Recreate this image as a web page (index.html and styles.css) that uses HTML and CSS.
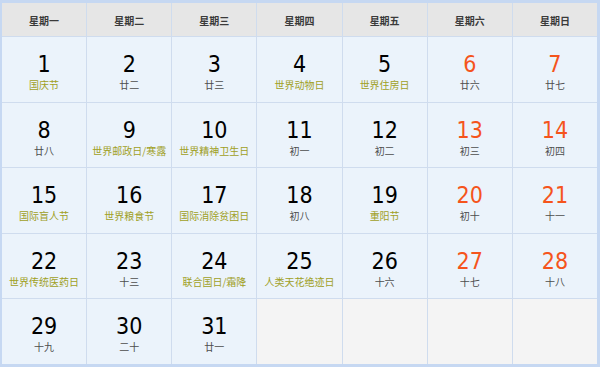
FILE: index.html
```html
<!DOCTYPE html>
<html lang="zh">
<head>
<meta charset="utf-8">
<link rel="stylesheet" href="styles.css">
</head>
<body>
<div class="cal">
  <div class="grid">
    <div class="hd">星期一</div><div class="hd">星期二</div><div class="hd">星期三</div><div class="hd">星期四</div><div class="hd">星期五</div><div class="hd">星期六</div><div class="hd">星期日</div>

    <div class="day"><span class="num">1</span><span class="fest">国庆节</span></div>
    <div class="day"><span class="num">2</span><span class="lunar">廿二</span></div>
    <div class="day"><span class="num">3</span><span class="lunar">廿三</span></div>
    <div class="day"><span class="num">4</span><span class="fest">世界动物日</span></div>
    <div class="day"><span class="num">5</span><span class="fest">世界住房日</span></div>
    <div class="day"><span class="num wk">6</span><span class="lunar">廿六</span></div>
    <div class="day"><span class="num wk">7</span><span class="lunar">廿七</span></div>

    <div class="day"><span class="num">8</span><span class="lunar">廿八</span></div>
    <div class="day"><span class="num">9</span><span class="fest">世界邮政日/寒露</span></div>
    <div class="day"><span class="num">10</span><span class="fest">世界精神卫生日</span></div>
    <div class="day"><span class="num">11</span><span class="lunar">初一</span></div>
    <div class="day"><span class="num">12</span><span class="lunar">初二</span></div>
    <div class="day"><span class="num wk">13</span><span class="lunar">初三</span></div>
    <div class="day"><span class="num wk">14</span><span class="lunar">初四</span></div>

    <div class="day"><span class="num">15</span><span class="fest">国际盲人节</span></div>
    <div class="day"><span class="num">16</span><span class="fest">世界粮食节</span></div>
    <div class="day"><span class="num">17</span><span class="fest">国际消除贫困日</span></div>
    <div class="day"><span class="num">18</span><span class="lunar">初八</span></div>
    <div class="day"><span class="num">19</span><span class="fest">重阳节</span></div>
    <div class="day"><span class="num wk">20</span><span class="lunar">初十</span></div>
    <div class="day"><span class="num wk">21</span><span class="lunar">十一</span></div>

    <div class="day"><span class="num">22</span><span class="fest">世界传统医药日</span></div>
    <div class="day"><span class="num">23</span><span class="lunar">十三</span></div>
    <div class="day"><span class="num">24</span><span class="fest">联合国日/霜降</span></div>
    <div class="day"><span class="num">25</span><span class="fest">人类天花绝迹日</span></div>
    <div class="day"><span class="num">26</span><span class="lunar">十六</span></div>
    <div class="day"><span class="num wk">27</span><span class="lunar">十七</span></div>
    <div class="day"><span class="num wk">28</span><span class="lunar">十八</span></div>

    <div class="day"><span class="num">29</span><span class="lunar">十九</span></div>
    <div class="day"><span class="num">30</span><span class="lunar">二十</span></div>
    <div class="day"><span class="num">31</span><span class="lunar">廿一</span></div>
    <div class="day empty"></div>
    <div class="day empty"></div>
    <div class="day empty"></div>
    <div class="day empty"></div>
  </div>
</div>
</body>
</html>
```
FILE: styles.css
```css
html, body {
  margin: 0;
  padding: 0;
  background: #ffffff;
}
.cal {
  width: 600px;
  height: 367px;
  box-sizing: border-box;
  border-style: solid;
  border-color: #c6d8f2;
  border-width: 3px 3px 3px 2px;
  background: #ffffff;
}
.grid {
  display: grid;
  grid-template-columns: repeat(7, 1fr);
  grid-template-rows: 33px repeat(5, 1fr);
  gap: 1px;
  height: 100%;
  background: #cfdcee;
}
.hd {
  background: #e6e6e6;
  color: #3a3a3a;
  font-family: "Noto Sans CJK SC", sans-serif;
  font-weight: bold;
  font-size: 10px;
  display: flex;
  align-items: center;
  justify-content: center;
  padding-top: 1px;
}
.day {
  background: #ebf3fb;
  display: flex;
  flex-direction: column;
  align-items: center;
  padding-top: 14px;
}
.day.empty {
  background: #f4f4f4;
}
.num {
  font-family: "DejaVu Sans Condensed", "DejaVu Sans", sans-serif;
  font-size: 23px;
  line-height: 26px;
  color: #000000;
}
.num.wk {
  color: #f5541c;
}
.lunar, .fest {
  font-family: "Noto Sans CJK SC", sans-serif;
  font-size: 10px;
  line-height: 14px;
  margin-top: 1px;
  white-space: nowrap;
}
.lunar {
  color: #4d4d4d;
}
.fest {
  color: #a0a01e;
}
```
